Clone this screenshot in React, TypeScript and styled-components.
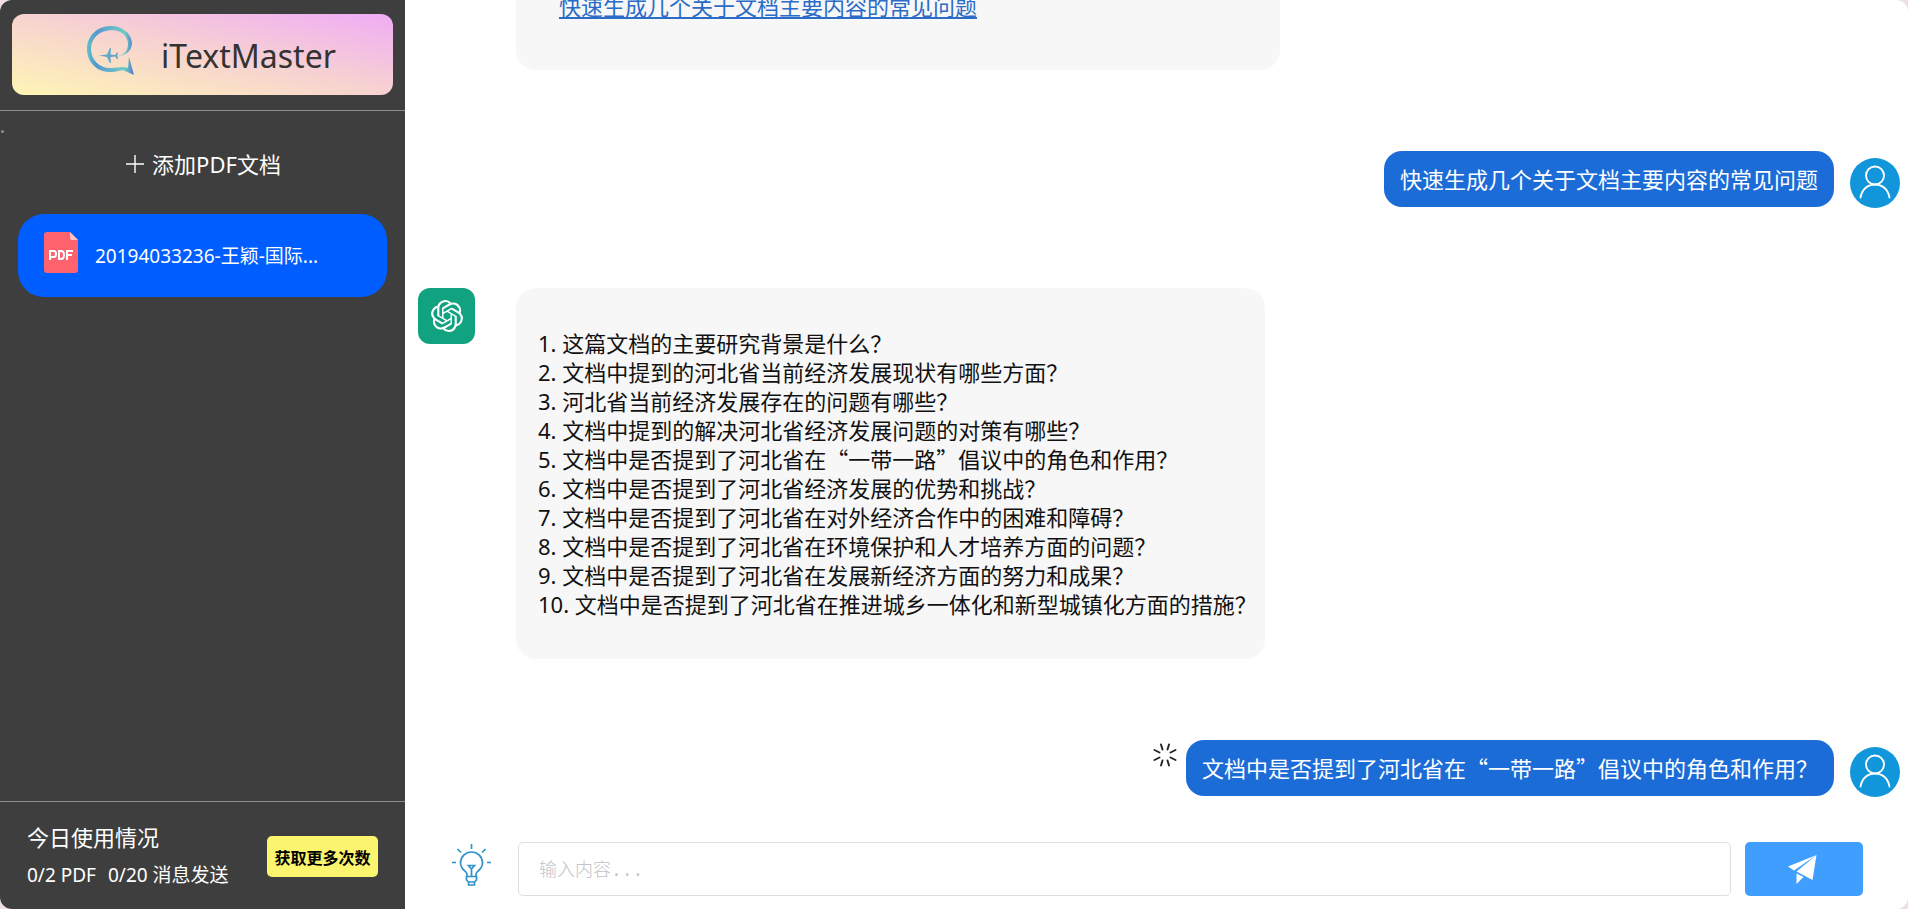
import React from "react";
import styled, { createGlobalStyle } from "styled-components";
import { SiOpenai } from "react-icons/si";

const CJK = `"Noto Sans CJK SC", sans-serif`;
const LATIN = `"Noto Sans", "Noto Sans CJK SC", sans-serif`;

const GlobalStyle = createGlobalStyle`
  * { box-sizing: border-box; }
  body { margin: 0; background: #f0dfe0; font-family: ${LATIN}; }
  button, input { font: inherit; }
  button { border: 0; padding: 0; cursor: pointer; }
`;

const Shell = styled.div`
  display: flex;
  height: 100vh;
  border-radius: 12px;
  overflow: hidden;
  background: #fff;
`;

const Sidebar = styled.aside`
  flex: none;
  width: 405px;
  display: flex;
  flex-direction: column;
  background: #3e3e3e;
  color: #fff;
`;

const BrandArea = styled.header`
  padding: 14px 12px 15px;
  border-bottom: 1px solid #8e8e8e;
`;

const Brand = styled.div`
  height: 81px;
  display: flex;
  justify-content: center;
  gap: 26px;
  padding-top: 11px;
  padding-left: 38px;
  padding-right: 22px;
  border-radius: 12px;
  background: linear-gradient(to top right, #fef5b5 0%, #f7d3d0 50%, #efacf6 100%);
  color: #333;
`;

const BrandName = styled.h1`
  margin: 0;
  padding-top: 7px;
  font-size: 32px;
  line-height: 48px;
  font-weight: 400;
`;

const Dot = styled.span`
  width: 3px;
  height: 3px;
  margin: 19px 0 0 1px;
  border-radius: 50%;
  background: #8e8e8e;
`;

const AddButton = styled.button`
  display: flex;
  align-items: center;
  justify-content: center;
  gap: 8px;
  height: 32px;
  margin: 15px 0 34px;
  padding-left: 2px;
  background: none;
  color: #fff;
  font-size: 22px;
  line-height: 32px;
`;

const FileItem = styled.button`
  display: flex;
  align-items: center;
  gap: 17px;
  height: 83px;
  margin: 0 18px;
  padding: 0 26px;
  border-radius: 26px;
  background: #005dff;
  color: #fff;
  font-size: 19px;
  line-height: 28px;
  text-align: left;
  svg { flex: none; margin-bottom: 7px; }
`;

const Usage = styled.footer`
  display: flex;
  align-items: center;
  justify-content: space-between;
  margin-top: auto;
  padding: 17px 27px 15px;
  border-top: 1px solid #8e8e8e;
`;

const UsageTitle = styled.h2`
  margin: 0;
  font-size: 22px;
  line-height: 37px;
  font-weight: 400;
`;

const UsageText = styled.p`
  display: flex;
  gap: 12px;
  margin: 0;
  font-size: 19px;
  line-height: 38px;
`;

const MoreButton = styled.button`
  width: 111px;
  height: 41px;
  border-radius: 5px;
  background: #faf46e;
  color: #000;
  font-size: 16px;
  font-weight: 700;
`;

const Main = styled.main`
  flex: 1;
  min-width: 0;
  display: flex;
  flex-direction: column;
`;

const Chat = styled.section`
  flex: 1;
  min-height: 0;
  display: flex;
  flex-direction: column;
  justify-content: flex-end;
  gap: 81px;
  padding: 0 8px 33px 13px;
  overflow: hidden;
  font-family: ${CJK};
  font-size: 22px;
  line-height: 29px;
`;

const BotRow = styled.div`
  display: flex;
  align-items: flex-start;
  gap: 41px;
`;

const BotAvatar = styled.div`
  flex: none;
  width: 57px;
  height: 56px;
  display: grid;
  place-items: center;
  border-radius: 12px;
  background: #11a37f;
  color: #fff;
`;

const BotBubble = styled.div<{ $wide?: boolean }>`
  width: ${(p) => (p.$wide ? "764px" : "auto")};
  padding: ${(p) => (p.$wide ? "50px 22px 50px 43px" : "40px 8px 41px 22px")};
  border-radius: 20px;
  background: #f7f7f7;
  color: #111;
`;

const Suggestion = styled.a`
  color: #2a6cc8;
  text-decoration: underline;
`;

const Questions = styled.ol`
  margin: 0;
  padding: 0;
  list-style: none;
`;

const Marker = styled.span`
  font-family: ${LATIN};
  line-height: 1;
`;

const UserRow = styled.div`
  display: flex;
  align-items: flex-start;
  justify-content: flex-end;
`;

const UserBubble = styled.div`
  margin-right: 16px;
  padding: 13px 16px 14px;
  border-radius: 18px;
  background: #1c6cd8;
  color: #fff;
`;

const UserAvatar = styled.svg`
  flex: none;
  margin: 7px 0 -1px;
`;

const Spinner = styled.svg`
  flex: none;
  margin: 3px 9px 0 0;
`;

const Composer = styled.form`
  flex: none;
  display: flex;
  align-items: center;
  gap: 14px;
  padding: 13px 45px 13px 46px;
`;

const TipButton = styled.button`
  height: 54px;
  margin-right: 12px;
  padding: 2px 0 10px;
  background: none;
  svg { display: block; }
`;

const MessageInput = styled.input`
  flex: 1;
  min-width: 0;
  height: 54px;
  padding: 4px 20px 0;
  border: 1px solid #dcdfe6;
  border-radius: 5px;
  background: #fff;
  font-family: "Liberation Mono", "Noto Sans CJK SC", monospace;
  font-size: 18px;
  outline: none;
  &::placeholder { color: #c0c4cc; font-weight: 300; opacity: 1; }
`;

const SendButton = styled.button`
  width: 118px;
  height: 54px;
  display: grid;
  place-items: center;
  padding-right: 4px;
  border-radius: 5px;
  background: #409eff;
`;

const Logo = () => (
  <svg width="50" height="52" viewBox="0 0 50 52" aria-hidden="true">
    <defs>
      <linearGradient id="ring" x1="0" y1="0" x2="1" y2="0">
        <stop offset="0" stopColor="#5fc3c4" />
        <stop offset=".2" stopColor="#5397d0" />
        <stop offset=".45" stopColor="#63b0cc" />
        <stop offset=".8" stopColor="#72ccc2" />
        <stop offset="1" stopColor="#4c79d0" />
      </linearGradient>
    </defs>
    <path
      fill="url(#ring)"
      d="M33 31C40 31 47 26 47 18C46 7 36 1 26 1C12 1 2 11 2 24C2 38 13 48 27 47C33 47 37 44 40 46L49 50L44 32L43 43C38 41 33 43 27 43C15 44 6 35 6 24C6 13 14 6 26 5C36 5 43 11 43 19C43 26 39 30 33 31Z"
    />
    <path
      fill="#5fa9c9"
      d="M14 30.500L22 29.500L25 23L26 23L25.500 29.500L30 30L32 27.500L33 27.500L32.500 30.500L33 34L32 34L30 31.500L25.500 32L26 38L25 38L22 32Z"
    />
  </svg>
);

const PdfIcon = () => (
  <svg width="34" height="41" viewBox="0 0 34 41" aria-hidden="true">
    <path fill="#ff646e" d="M3 0H26L34 8V38Q34 41 31 41H3Q0 41 0 38V3Q0 0 3 0Z" />
    <path fill="#ffc2c6" d="M26 0L34 8H28Q26 8 26 6Z" />
    <g fill="none" stroke="#fff" strokeWidth="2">
      <path d="M6 28V19H10Q12 19 12 22Q12 25 10 25H6" />
      <path d="M15 19V27H17Q20 27 20 23Q20 19 17 19Z" />
      <path d="M23 28V19H29M23 23H28" />
    </g>
  </svg>
);

const PlusIcon = () => (
  <svg width="18" height="18" viewBox="0 0 18 18" stroke="#fff" strokeWidth="1.4" aria-hidden="true">
    <path d="M9 0V18M0 9H18" />
  </svg>
);

const Person = () => (
  <UserAvatar width="50" height="50" viewBox="0 0 50 50" aria-label="用户">
    <circle cx="25" cy="25" r="25" fill="#1296db" />
    <g fill="none" stroke="#fff" strokeWidth="1.9" strokeLinecap="round">
      <circle cx="25" cy="17.500" r="9" />
      <path d="M10.500 39.500C12 31 18 26.500 25 26.500S38 31 39.500 39.500" />
    </g>
  </UserAvatar>
);

const Loading = () => (
  <Spinner width="24" height="24" viewBox="0 0 24 24" stroke="#222" strokeWidth="1.9" strokeLinecap="round" aria-label="加载中">
    <path d="M9.500 6.500L8 1.500M14.500 6.500L16 1.500M17.500 9.500L22.500 7M17.500 14.500L22.500 17M14.500 17.500L16 22.500M9.500 17.500L8 22.500M6.500 14.500L1.500 17M6.500 9.500L1.500 7" />
  </Spinner>
);

const Bulb = () => (
  <svg width="41" height="42" viewBox="0 0 41 42" fill="none" stroke="#2f93cb" strokeWidth="1.7" aria-hidden="true">
    <path d="M20.500 0V5M6.500 5L10 8.500M34.500 5L31 8.500M1 18.500H5M36 18.500H40" />
    <path d="M16 32V30C16 27 9.500 26 9.500 19A11 11 0 0 1 31.500 19C31.500 26 25 27 25 30V32" />
    <path d="M15.500 32.500H25.500V36L23.500 38V41H17.500V38L15.500 36ZM17.500 38H23.500M20.500 32V25L17.500 21.500H23.500L20.500 25" />
  </svg>
);

const Plane = () => (
  <svg width="30" height="29" viewBox="0 0 30 29" fill="#fff" aria-hidden="true">
    <path d="M29.500 0L1 11.500L7 15.500Z" />
    <path d="M29.500 0L9.500 16.500L25.500 25Z" />
    <path d="M9.500 18.500L16.500 22L9.500 29Z" />
  </svg>
);

const questions = [
  "这篇文档的主要研究背景是什么？",
  "文档中提到的河北省当前经济发展现状有哪些方面？",
  "河北省当前经济发展存在的问题有哪些？",
  "文档中提到的解决河北省经济发展问题的对策有哪些？",
  "文档中是否提到了河北省在“一带一路”倡议中的角色和作用？",
  "文档中是否提到了河北省经济发展的优势和挑战？",
  "文档中是否提到了河北省在对外经济合作中的困难和障碍？",
  "文档中是否提到了河北省在环境保护和人才培养方面的问题？",
  "文档中是否提到了河北省在发展新经济方面的努力和成果？",
  "文档中是否提到了河北省在推进城乡一体化和新型城镇化方面的措施？",
];

export default function App() {
  return (
    <Shell lang="zh-CN">
      <GlobalStyle />
      <Sidebar>
        <BrandArea>
          <Brand>
            <Logo />
            <BrandName>iTextMaster</BrandName>
          </Brand>
        </BrandArea>
        <Dot />
        <AddButton type="button">
          <PlusIcon />
          添加PDF文档
        </AddButton>
        <FileItem type="button">
          <PdfIcon />
          20194033236-王颖-国际...
        </FileItem>
        <Usage>
          <div>
            <UsageTitle>今日使用情况</UsageTitle>
            <UsageText>
              <span>0/2 PDF</span>
              <span>0/20 消息发送</span>
            </UsageText>
          </div>
          <MoreButton type="button">获取更多次数</MoreButton>
        </Usage>
      </Sidebar>
      <Main>
        <Chat>
          <BotRow>
            <BotAvatar>
              <SiOpenai size={32} />
            </BotAvatar>
            <BotBubble $wide>
              <Suggestion href="#faq">快速生成几个关于文档主要内容的常见问题</Suggestion>
            </BotBubble>
          </BotRow>
          <UserRow>
            <UserBubble>快速生成几个关于文档主要内容的常见问题</UserBubble>
            <Person />
          </UserRow>
          <BotRow>
            <BotAvatar>
              <SiOpenai size={32} />
            </BotAvatar>
            <BotBubble>
              <Questions>
                {questions.map((text, i) => (
                  <li key={text}>
                    <Marker>{i + 1}. </Marker>
                    {text}
                  </li>
                ))}
              </Questions>
            </BotBubble>
          </BotRow>
          <UserRow>
            <Loading />
            <UserBubble>{questions[4]}</UserBubble>
            <Person />
          </UserRow>
        </Chat>
        <Composer onSubmit={(e) => e.preventDefault()}>
          <TipButton type="button" aria-label="提示">
            <Bulb />
          </TipButton>
          <MessageInput type="text" placeholder="输入内容..." aria-label="输入内容" />
          <SendButton type="submit" aria-label="发送">
            <Plane />
          </SendButton>
        </Composer>
      </Main>
    </Shell>
  );
}
